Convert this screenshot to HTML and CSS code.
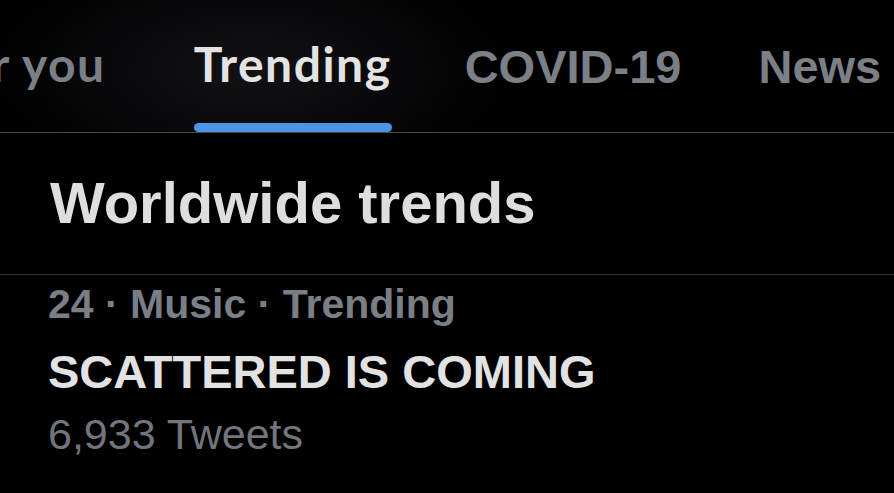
FILE: index.html
```html
<!DOCTYPE html>
<html lang="en">
<head>
<meta charset="utf-8">
<title>Trending</title>
<link rel="stylesheet" href="styles.css">
</head>
<body>
<nav class="tabs">
  <div class="tab tab-foryou"><span class="label lato">For you</span></div>
  <div class="tab tab-trending"><span class="label lato active">Trending</span><span class="indicator"></span></div>
  <div class="tab tab-covid"><span class="label sans">COVID-19</span></div>
  <div class="tab tab-news"><span class="label sans">News</span></div>
</nav>
<section class="section-head">
  <h2 class="section-title">Worldwide trends</h2>
</section>
<article class="trend">
  <div class="trend-meta">24 · Music · Trending</div>
  <div class="trend-name">SCATTERED IS COMING</div>
  <div class="trend-count">6,933 Tweets</div>
</article>
</body>
</html>
```
FILE: styles.css
```css
html, body {
  margin: 0;
  padding: 0;
  background: #000;
  width: 894px;
  height: 493px;
  overflow: hidden;
}

.tabs {
  display: flex;
  height: 132px;
  border-bottom: 1px solid #48484a;
  overflow: hidden;
  background: radial-gradient(ellipse 260px 120px at 250px 70px, #121214 0%, #08080a 60%, #000 100%);
}

.tab {
  display: flex;
  flex-direction: column;
  align-items: center;
  justify-content: space-between;
  height: 132px;
  flex: none;
}

.label {
  display: block;
  white-space: nowrap;
  color: #7b7f86;
}

.lato {
  font-family: Lato, "Liberation Sans", sans-serif;
  font-weight: 700;
  font-size: 48px;
  line-height: 48px;
  letter-spacing: 1.5px;
  padding-top: 40px;
}

.sans {
  font-family: "Liberation Sans", Arial, sans-serif;
  font-weight: 700;
  font-size: 47px;
  line-height: 47px;
  padding-top: 43px;
}

.label.active {
  color: #e3e3e3;
}

.tab-foryou {
  margin-left: -64px;
}

.tab-trending {
  width: 198px;
  margin-left: 88px;
}

.tab-covid {
  margin-left: 73px;
}

.tab-news {
  margin-left: 77px;
}

.indicator {
  display: block;
  width: 198px;
  height: 9px;
  border-radius: 5px;
  background: #4a95e6;
}

.section-head {
  padding: 41px 0 42px 50px;
  border-bottom: 1px solid #343436;
}

.section-title {
  margin: 0;
  font-family: "Liberation Sans", Arial, sans-serif;
  font-weight: 700;
  font-size: 58px;
  line-height: 58px;
  color: #dedede;
}

.trend {
  padding: 9px 0 0 48px;
  font-family: "Liberation Sans", Arial, sans-serif;
}

.trend-meta {
  font-weight: 700;
  font-size: 41px;
  line-height: 41px;
  color: #7a7e85;
}

.trend-name {
  margin-top: 23px;
  font-weight: 700;
  font-size: 47px;
  line-height: 47px;
  color: #e2e2e2;
}

.trend-count {
  margin-top: 18px;
  font-weight: 400;
  font-size: 43px;
  line-height: 43px;
  color: #72767c;
}
```
